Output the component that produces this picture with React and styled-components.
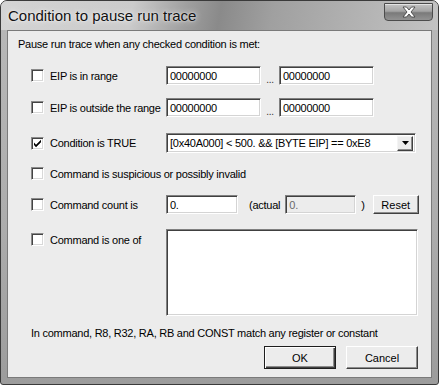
import styled, { createGlobalStyle } from 'styled-components';

const UI_FONT = '"Liberation Sans", Arial, sans-serif';

const GlobalStyle = createGlobalStyle`
  html, body {
    margin: 0;
    padding: 0;
    background: #ffffff;
  }
  * {
    box-sizing: border-box;
  }
`;

const Window = styled.div`
  width: 439px;
  height: 385px;
  display: flex;
  flex-direction: column;
  border: 1px solid #3a3a3a;
  border-radius: 7px 7px 3px 3px;
  overflow: hidden;
  background: linear-gradient(180deg, #b9b9b9 0%, #acacac 60%, #9c9c9c 100%);
`;

const TitleBar = styled.div`
  height: 29px;
  flex-shrink: 0;
  display: flex;
  align-items: flex-start;
  padding-left: 7px;
  background: linear-gradient(
    100deg,
    #d4d4d4 0%,
    #cbcbcb 30%,
    #a0a0a0 42%,
    #8a8a8a 50%,
    #a0a0a0 62%,
    #b1b1b1 80%,
    #c3c3c3 100%
  );
`;

const Title = styled.div`
  flex: 1;
  font-family: "Liberation Sans", Arial, sans-serif;
  font-size: 15px;
  line-height: 29px;
  color: #111111;
  text-shadow: 0 0 6px rgba(255, 255, 255, 0.9), 0 0 2px rgba(255, 255, 255, 0.8);
`;

const CloseButton = styled.div`
  width: 49px;
  height: 18px;
  margin: 2px 5px 0 0;
  display: flex;
  align-items: center;
  justify-content: center;
  border: 1px solid #4c4c4c;
  border-radius: 0 0 4px 4px;
  background: linear-gradient(180deg, #c4c4c4 0%, #a4a4a4 45%, #7a7a7a 55%, #929292 100%);
  box-shadow: inset 0 1px 0 rgba(255, 255, 255, 0.55);
`;

const Frame = styled.div`
  flex: 1;
  display: flex;
  min-height: 0;
  padding: 0 6px 6px 6px;
`;

const Client = styled.div`
  flex: 1;
  min-width: 0;
  overflow: hidden;
  display: flex;
  flex-direction: column;
  background: #ececec;
  border: 1px solid #7a7a7a;
  padding: 6px 13px 0 10px;
  font-family: ${UI_FONT};
  font-size: 11px;
  letter-spacing: -0.25px;
  color: #000000;
`;

const Text = styled.div`
  line-height: 14px;
  height: 14px;
  white-space: nowrap;
  margin: ${(p) => p.$mt || 0}px 0 0 ${(p) => p.$ml || 0}px;
`;

const Row = styled.div`
  display: grid;
  grid-template-columns: 135px 1fr;
  align-items: ${(p) => (p.$alignTop ? 'start' : 'center')};
  margin: ${(p) => p.$mt}px 0 0 13px;
`;

const Check = styled.label`
  display: flex;
  align-items: center;
  gap: 6px;
  height: 19px;
  white-space: nowrap;
  margin-top: ${(p) => p.$mt || 0}px;
`;

const Box = styled.span`
  width: 13px;
  height: 13px;
  flex-shrink: 0;
  display: flex;
  align-items: center;
  justify-content: center;
  background: #ffffff;
  border: 1px solid;
  border-color: #8a8a8a #ffffff #ffffff #8a8a8a;
  box-shadow: inset 1px 1px 0 #444444, inset -1px -1px 0 #d8d8d8;
`;

const Controls = styled.div`
  display: flex;
  align-items: center;
`;

const Field = styled.div`
  width: ${(p) => p.$w}px;
  height: ${(p) => p.$h || 19}px;
  flex-shrink: 0;
  display: flex;
  align-items: ${(p) => (p.$multi ? 'flex-start' : 'center')};
  padding-left: 3px;
  background: ${(p) => (p.$disabled ? '#ececec' : '#ffffff')};
  color: ${(p) => (p.$disabled ? '#6a6a6a' : '#000000')};
  border: 1px solid;
  border-color: #808080 #ffffff #ffffff #808080;
  box-shadow: inset 1px 1px 0 #404040, inset -1px -1px 0 #d4d4d4;
  white-space: nowrap;
  overflow: hidden;
  margin-left: ${(p) => p.$ml || 0}px;
`;

const Dots = styled.span`
  width: 18px;
  align-self: flex-end;
  text-align: center;
  font-size: 10px;
  line-height: 10px;
  color: #333333;
`;

const Combo = styled(Field)`
  justify-content: space-between;
  padding-right: 2px;
`;

const DropButton = styled.span`
  width: 16px;
  height: 15px;
  display: flex;
  align-items: center;
  justify-content: center;
  background: #ececec;
  border: 1px solid;
  border-color: #f4f4f4 #404040 #404040 #f4f4f4;
  box-shadow: inset -1px -1px 0 #8c8c8c;
`;

const Caption = styled.span`
  white-space: nowrap;
  margin-left: ${(p) => p.$ml || 0}px;
`;

const PushButton = styled.button`
  width: ${(p) => p.$w}px;
  height: ${(p) => p.$h}px;
  flex-shrink: 0;
  margin-left: ${(p) => p.$ml || 0}px;
  padding: 0;
  font-family: ${UI_FONT};
  font-size: 11px;
  color: #000000;
  background: #ececec;
  border: 1px solid;
  border-color: ${(p) => (p.$default ? '#1e1e1e' : '#ffffff #404040 #404040 #ffffff')};
  box-shadow: ${(p) =>
    p.$default
      ? 'inset 1px 1px 0 #ffffff, inset -1px -1px 0 #404040, inset -2px -2px 0 #8c8c8c'
      : 'inset -1px -1px 0 #8c8c8c'};
`;

const ButtonRow = styled.div`
  display: flex;
  justify-content: flex-end;
  margin-top: 6px;
`;

const CheckMark = () => (
  <svg width="9" height="9" viewBox="0 0 9 9">
    <path d="M1 3.6 L3 5.8 L8 0.8 L8 3.2 L3 8.2 L1 6 Z" fill="#000000" />
  </svg>
);

const CloseGlyph = () => (
  <svg width="16" height="12" viewBox="0 0 16 12">
    <path
      d="M2 1 H5.5 L8 4 L10.5 1 H14 L10 6 L14 11 H10.5 L8 8 L5.5 11 H2 L6 6 Z"
      fill="#ffffff"
      stroke="#3a3a3a"
      strokeWidth="0.8"
    />
  </svg>
);

const DownArrow = () => (
  <svg width="7" height="4" viewBox="0 0 7 4">
    <path d="M0 0 H7 L3.5 4 Z" fill="#000000" />
  </svg>
);

const Checkbox = ({ checked, label, mt }) => (
  <Check $mt={mt}>
    <Box>{checked && <CheckMark />}</Box>
    {label}
  </Check>
);

export default function App() {
  return (
    <>
      <GlobalStyle />
      <Window>
        <TitleBar>
          <Title>Condition to pause run trace</Title>
          <CloseButton>
            <CloseGlyph />
          </CloseButton>
        </TitleBar>
        <Frame>
          <Client>
            <Text>Pause run trace when any checked condition is met:</Text>

            <Row $mt={15}>
              <Checkbox label="EIP is in range" />
              <Controls>
                <Field $w={95}>00000000</Field>
                <Dots>...</Dots>
                <Field $w={95}>00000000</Field>
              </Controls>
            </Row>

            <Row $mt={13}>
              <Checkbox label="EIP is outside the range" />
              <Controls>
                <Field $w={95}>00000000</Field>
                <Dots>...</Dots>
                <Field $w={95}>00000000</Field>
              </Controls>
            </Row>

            <Row $mt={16}>
              <Checkbox checked label="Condition is TRUE" />
              <Controls>
                <Combo $w={250} $h={20}>
                  [0x40A000] &lt; 500. &amp;&amp; [BYTE EIP] == 0xE8
                  <DropButton>
                    <DownArrow />
                  </DropButton>
                </Combo>
              </Controls>
            </Row>

            <Row $mt={11}>
              <Checkbox label="Command is suspicious or possibly invalid" />
            </Row>

            <Row $mt={12}>
              <Checkbox label="Command count is" />
              <Controls>
                <Field $w={72}>0.</Field>
                <Caption $ml={11}>(actual</Caption>
                <Field $w={71} $ml={5} $disabled>
                  0.
                </Field>
                <Caption $ml={5}>)</Caption>
                <PushButton $w={46} $h={19} $ml={8}>
                  Reset
                </PushButton>
              </Controls>
            </Row>

            <Row $mt={15} $alignTop>
              <Checkbox label="Command is one of" mt={1} />
              <Controls>
                <Field $w={252} $h={87} $multi />
              </Controls>
            </Row>

            <Text $mt={10} $ml={13}>
              In command, R8, R32, RA, RB and CONST match any register or constant
            </Text>

            <ButtonRow>
              <PushButton $w={72} $h={23} $default>
                OK
              </PushButton>
              <PushButton $w={72} $h={23} $ml={10}>
                Cancel
              </PushButton>
            </ButtonRow>
          </Client>
        </Frame>
      </Window>
    </>
  );
}
